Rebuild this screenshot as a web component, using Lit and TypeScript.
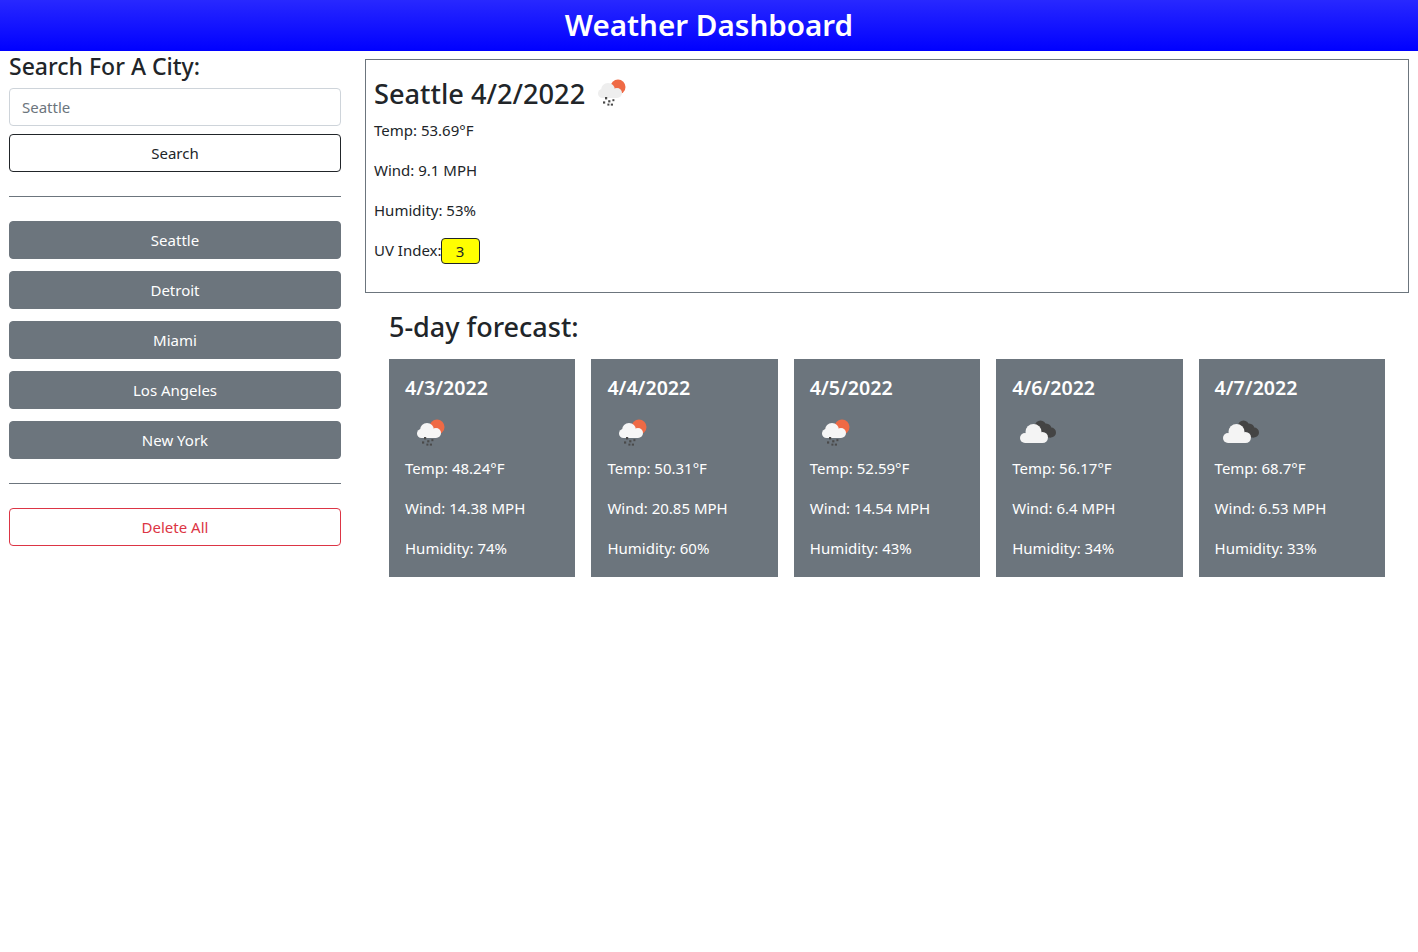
import { css, html, LitElement, svg } from "lit";
import { customElement } from "lit/decorators.js";

interface Day {
  date: string;
  icon: "rain" | "clouds";
  temp: string;
  wind: string;
  humidity: string;
}

const cities = ["Seattle", "Detroit", "Miami", "Los Angeles", "New York"];

const days: Day[] = [
  { date: "4/3/2022", icon: "rain", temp: "48.24", wind: "14.38", humidity: "74" },
  { date: "4/4/2022", icon: "rain", temp: "50.31", wind: "20.85", humidity: "60" },
  { date: "4/5/2022", icon: "rain", temp: "52.59", wind: "14.54", humidity: "43" },
  { date: "4/6/2022", icon: "clouds", temp: "56.17", wind: "6.4", humidity: "34" },
  { date: "4/7/2022", icon: "clouds", temp: "68.7", wind: "6.53", humidity: "33" },
];

const rainIcon = svg`
  <circle cx="32" cy="20" r="7.5" fill="#ef6a45" />
  <g fill="var(--cloud)">
    <circle cx="16.5" cy="26.5" r="4.5" />
    <circle cx="22" cy="23" r="7" />
    <circle cx="31" cy="26" r="5" />
    <rect x="16.5" y="24" width="14.5" height="7" />
  </g>
  <g fill="#4a4a4a">
    <rect x="19" y="30" width="2.2" height="2.4" />
    <rect x="17" y="34.4" width="2.2" height="2.2" />
    <rect x="22.2" y="33.2" width="2.2" height="2.2" />
    <rect x="26.4" y="32.2" width="2" height="2" />
    <rect x="21.4" y="36.6" width="2" height="2" />
    <rect x="24.8" y="36.6" width="2.2" height="2" />
  </g>
`;

const cloudsIcon = svg`
  <g fill="#444">
    <circle cx="28.5" cy="19" r="5.5" />
    <circle cx="34" cy="22" r="5.5" />
    <circle cx="39" cy="25.5" r="5" />
    <rect x="30" y="24" width="9" height="6.5" />
  </g>
  <g fill="#f4f4f4">
    <circle cx="13" cy="31" r="5" />
    <circle cx="21.5" cy="25" r="8" />
    <circle cx="30.5" cy="30.5" r="5.5" />
    <rect x="13" y="28" width="17.5" height="8" />
  </g>
`;

@customElement("app-root")
export class AppRoot extends LitElement {
  static styles = css`
    :host {
      display: block;
      min-height: 952px;
      background: #fff;
      color: #212529;
      font-family: "Noto Sans", "Open Sans", sans-serif;
      font-size: 15px;
      line-height: 24px;
    }

    * {
      box-sizing: border-box;
    }

    header {
      height: 51px;
      background: linear-gradient(#2828ff, #0000ff);
      color: #fff;
      font-size: 29.6px;
      font-weight: 600;
      line-height: 50px;
      text-align: center;
    }

    .page {
      display: flex;
    }

    aside {
      flex: none;
      width: 350px;
      padding: 1px 9px 0;
    }

    h4 {
      margin: 0 0 7px;
      font-size: 23px;
      font-weight: 500;
      line-height: 29px;
    }

    input {
      display: block;
      width: 100%;
      height: 38px;
      padding: 0 12px;
      border: 1px solid #ced4da;
      border-radius: 4px;
      font: inherit;
      color: #212529;
      outline: none;
    }

    input::placeholder {
      color: #6c757d;
      opacity: 1;
    }

    button {
      display: block;
      width: 100%;
      height: 38px;
      padding: 0 0 1px;
      border: 1px solid transparent;
      border-radius: 4px;
      background: none;
      color: #212529;
      font: inherit;
      text-align: center;
    }

    .search {
      margin-top: 8px;
      border-color: #212529;
    }

    .cities {
      display: flex;
      flex-direction: column;
      gap: 12px;
    }

    .city {
      background: #6c757d;
      border-color: #6c757d;
      color: #fff;
    }

    .delete {
      border-color: #dc3545;
      color: #dc3545;
    }

    hr {
      height: 1px;
      margin: 24px 0;
      border: none;
      background: #6c757d;
    }

    main {
      flex: none;
      width: 1059px;
      padding: 8px 0 0 15px;
    }

    .current {
      height: 234px;
      padding: 8px;
      border: 1px solid #6c757d;
    }

    .title {
      display: flex;
      align-items: center;
      height: 50px;
      padding-top: 2px;
    }

    .title .icon {
      margin: 0 0 4px 1px;
    }

    h2 {
      margin: 0;
      font-size: 27.2px;
      font-weight: 500;
      line-height: 34px;
    }

    p {
      margin: 0 0 16px;
    }

    .uv {
      display: flex;
      align-items: center;
      height: 24px;
    }

    .badge {
      display: block;
      width: 39px;
      height: 26px;
      margin: 2px 0 0 -1px;
      border: 1px solid #212529;
      border-radius: 4px;
      background: #ff0;
      line-height: 24px;
      text-align: center;
    }

    .forecast {
      padding: 17px 24px 0;
    }

    h3 {
      margin: 0 0 15px;
      font-size: 27px;
      font-weight: 500;
      line-height: 34px;
    }

    .cards {
      display: grid;
      grid-template-columns: repeat(5, 1fr);
      gap: 16px;
    }

    .card {
      height: 218px;
      padding: 16px;
      background: #6c757d;
      color: #fff;
    }

    h5 {
      margin: 0;
      font-size: 19.6px;
      font-weight: 600;
      line-height: 26px;
    }

    .card p:last-child {
      margin-bottom: 0;
    }

    .icon {
      display: block;
      flex: none;
      width: 50px;
      height: 50px;
    }

    .current .icon {
      --cloud: #eeeeee;
    }

    .card .icon {
      margin: 6px 0 -1px;
      --cloud: #f6f6f6;
    }
  `;

  private icon(kind: Day["icon"]) {
    return html`<svg class="icon" viewBox="0 0 50 50" aria-hidden="true">
      ${kind === "rain" ? rainIcon : cloudsIcon}
    </svg>`;
  }

  render() {
    return html`<header>Weather Dashboard</header>
      <div class="page">
        <aside>
          <h4>Search For A City:</h4>
          <input type="text" placeholder="Seattle" />
          <button class="search">Search</button>
          <hr />
          <div class="cities">
            ${cities.map((c) => html`<button class="city">${c}</button>`)}
          </div>
          <hr />
          <button class="delete">Delete All</button>
        </aside>
        <main>
          <section class="current">
            <div class="title">
              <h2>Seattle 4/2/2022</h2>
              ${this.icon("rain")}
            </div>
            <p>Temp: 53.69°F</p>
            <p>Wind: 9.1 MPH</p>
            <p>Humidity: 53%</p>
            <div class="uv">UV Index:<span class="badge">3</span></div>
          </section>
          <section class="forecast">
            <h3>5-day forecast:</h3>
            <div class="cards">
              ${days.map(
                (d) => html`<div class="card">
                  <h5>${d.date}</h5>
                  ${this.icon(d.icon)}
                  <p>Temp: ${d.temp}°F</p>
                  <p>Wind: ${d.wind} MPH</p>
                  <p>Humidity: ${d.humidity}%</p>
                </div>`,
              )}
            </div>
          </section>
        </main>
      </div>`;
  }
}
